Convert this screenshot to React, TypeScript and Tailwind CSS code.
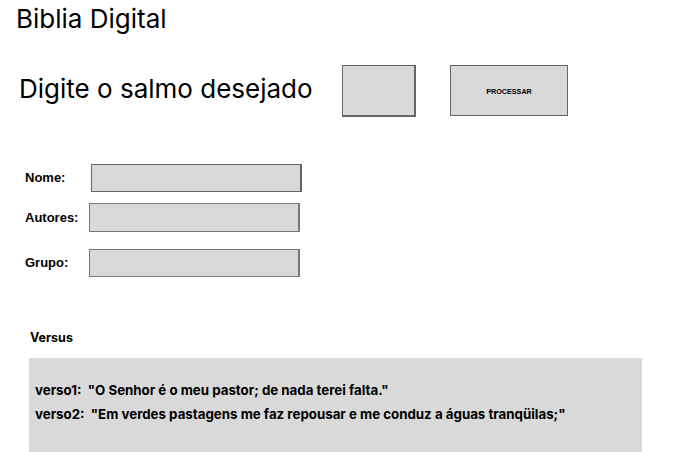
export default function App() {
  const inter = { fontFamily: 'Inter, "Noto Sans", sans-serif' };
  return (
    <div className="w-[692px] h-[452px] bg-white overflow-hidden text-black" style={inter}>
      <div className="pl-[16px] pt-[3px] text-[26px] leading-[31px]">Biblia Digital</div>

      <div className="flex items-start mt-[31px]">
        <div className="ml-[19px] mt-[8px] text-[26px] leading-[32px] w-[323px]">Digite o salmo desejado</div>
        <div className="w-[74px] h-[52px] bg-[#d9d9d9] border border-[#666] border-r-2 border-b-2" />
        <button className="ml-[34px] w-[118px] h-[51px] bg-[#d9d9d9] border border-[#666] pt-[4px] text-[7.2px] font-bold font-['Liberation_Sans',Arial,sans-serif]">
          PROCESSAR
        </button>
      </div>

      <div className="flex flex-col mt-[47px] text-[13px] font-bold font-['Liberation_Sans',Arial,sans-serif]">
        <div className="flex items-center">
          <span className="ml-[25px] w-[66px]">Nome:</span>
          <div className="w-[211px] h-[28px] bg-[#d9d9d9] border border-[#666] border-r-2" />
        </div>
        <div className="flex items-center mt-[11px]">
          <span className="ml-[25px] w-[64px]">Autores:</span>
          <div className="w-[211px] h-[29px] bg-[#d9d9d9] border border-[#777] border-r-2" />
        </div>
        <div className="flex items-center mt-[17px]">
          <span className="ml-[25px] w-[64px]">Grupo:</span>
          <div className="w-[211px] h-[28px] bg-[#d9d9d9] border border-[#777] border-r-2" />
        </div>
      </div>

      <div className="ml-[30px] mt-[53px] text-[12.5px] font-bold leading-[15px]">Versus</div>
      <div className="ml-[29px] mt-[13px] w-[613px] h-[95px] bg-[#d9d9d9] pl-[6px] pt-[24px] text-[13.3px] font-bold leading-[16px] flex flex-col gap-[8px]">
        <div>verso1:&nbsp; "O Senhor é o meu pastor; de nada terei falta."</div>
        <div>verso2:&nbsp; "Em verdes pastagens me faz repousar e me conduz a águas tranqüilas;"</div>
      </div>
    </div>
  );
}
